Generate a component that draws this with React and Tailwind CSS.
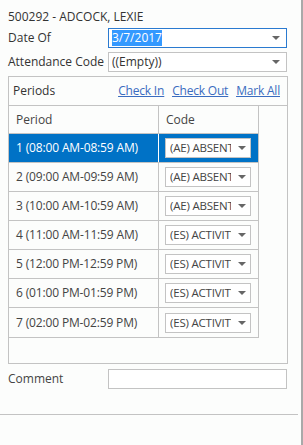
import { useState } from 'react'

const periods = [
    { label: '1 (08:00 AM-08:59 AM)', code: '(AE) ABSENT' },
    { label: '2 (09:00 AM-09:59 AM)', code: '(AE) ABSENT' },
    { label: '3 (10:00 AM-10:59 AM)', code: '(AE) ABSENT' },
    { label: '4 (11:00 AM-11:59 AM)', code: '(ES) ACTIVITY' },
    { label: '5 (12:00 PM-12:59 PM)', code: '(ES) ACTIVITY' },
    { label: '6 (01:00 PM-01:59 PM)', code: '(ES) ACTIVITY' },
    { label: '7 (02:00 PM-02:59 PM)', code: '(ES) ACTIVITY' },
]

function Caret() {
    return (
        <svg width="8" height="4" viewBox="0 0 8 4" className="shrink-0">
            <path d="M0 0 L8 0 L4 4 Z" fill="#666" />
        </svg>
    )
}

function ComboBox({ value, focused, selectText }) {
    return (
        <div className={`flex h-[20px] w-[179px] items-center border bg-white pl-[3px] pr-[6px] ${focused ? 'border-[#2a7ad0]' : 'border-[#c3c3c3]'}`}>
            <div className="flex-1 truncate leading-[16px]">
                <span className={selectText ? 'bg-[#3399ff] text-white' : ''}>{value}</span>
            </div>
            <Caret />
        </div>
    )
}

// code text is clipped by the box, like the native combo
function CodeSelect({ value }) {
    return (
        <div className="flex h-[20px] w-[86px] items-center border border-[#c3c3c3] bg-white pl-[4px] pr-[4px]">
            <div className="w-[61px] overflow-hidden whitespace-nowrap text-[11.5px] leading-[16px] tracking-[-0.2px] text-[#444]">{value}</div>
            <div className="flex flex-1 justify-end">
                <Caret />
            </div>
        </div>
    )
}

export default function App() {
    const [selected, setSelected] = useState(0)

    return (
        <div className="h-[445px] w-[303px] border-r-2 border-[#a9a9a9] bg-[#fcfdfc] text-[12px] text-[#333]" style={{ fontFamily: '"Open Sans", "Noto Sans", sans-serif' }}>
            <div className="px-[8px] pt-[9px] leading-[16px]">500292 - ADCOCK, LEXIE</div>

            <div className="mt-[3px] flex items-center px-[8px]">
                <div className="w-[100px]">Date Of</div>
                <ComboBox value="3/7/2017" focused selectText />
            </div>

            <div className="mt-[4px] flex items-center px-[8px]">
                <div className="w-[100px]">Attendance Code</div>
                <ComboBox value="((Empty))" />
            </div>

            <div className="mx-[8px] mt-[4px] h-[288px] w-[280px] border border-[#c3c3c3]">
                <div className="flex h-[29px] items-center border-b border-[#c3c3c3] pl-[4px] pr-[7px]">
                    <span className="flex-1">Periods</span>
                    <div className="flex gap-[8px] tracking-[-0.2px] text-[#3a6cc0] underline">
                        <a href="#">Check In</a>
                        <a href="#">Check Out</a>
                        <a href="#">Mark All</a>
                    </div>
                </div>

                <div className="w-[250px] border-r border-b border-[#c3c3c3] text-[#444]">
                    <div className="flex h-[28px] border-b border-[#c3c3c3]">
                        <div className="flex w-[150px] items-center border-r border-[#c3c3c3] pl-[7px]">Period</div>
                        <div className="flex items-center pl-[7px]">Code</div>
                    </div>
                    {periods.map((p, idx) => (
                        <div
                            key={idx}
                            onClick={() => setSelected(idx)}
                            className={`flex h-[29px] ${idx < periods.length - 1 ? 'border-b border-[#c3c3c3]' : ''} ${selected === idx ? 'bg-[#0072c6] text-white' : ''}`}
                        >
                            <div className={`flex w-[150px] items-center border-r pl-[7px] tracking-[-0.15px] ${selected === idx ? 'border-white' : 'border-[#c3c3c3]'}`}>{p.label}</div>
                            <div className="flex items-center pl-[6px]">
                                <CodeSelect value={p.code} />
                            </div>
                        </div>
                    ))}
                </div>
            </div>

            <div className="mt-[5px] flex items-center px-[8px]">
                <div className="w-[100px] text-[#444]">Comment</div>
                <div className="h-[20px] w-[179px] border border-[#c3c3c3] bg-white" />
            </div>

            <div className="mt-[25px] h-px w-[298px] bg-[#c3c3c3]" />
        </div>
    )
}
